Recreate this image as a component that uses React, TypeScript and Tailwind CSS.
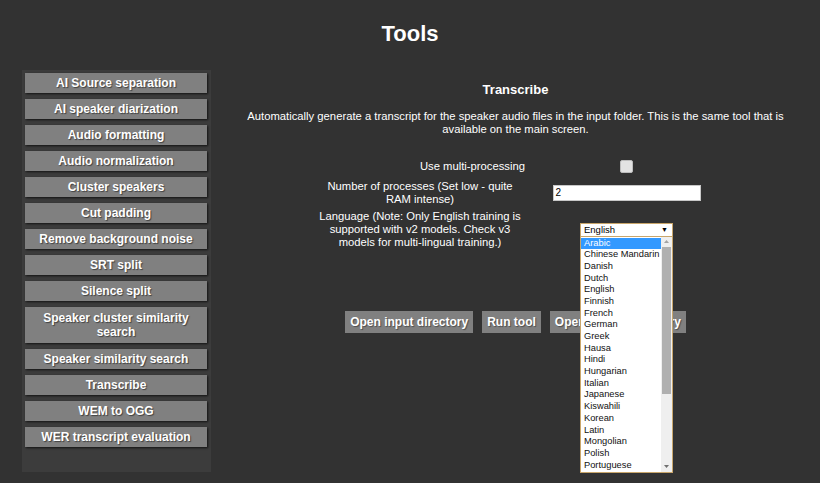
import React from 'react';

const TOOLS = [
  'AI Source separation',
  'AI speaker diarization',
  'Audio formatting',
  'Audio normalization',
  'Cluster speakers',
  'Cut padding',
  'Remove background noise',
  'SRT split',
  'Silence split',
  'Speaker cluster similarity search',
  'Speaker similarity search',
  'Transcribe',
  'WEM to OGG',
  'WER transcript evaluation',
];

const LANGUAGES = [
  'Arabic', 'Chinese Mandarin', 'Danish', 'Dutch', 'English', 'Finnish', 'French',
  'German', 'Greek', 'Hausa', 'Hindi', 'Hungarian', 'Italian', 'Japanese',
  'Kiswahili', 'Korean', 'Latin', 'Mongolian', 'Polish', 'Portuguese',
];

function ToolButton({ label }: { label: string }) {
  // the one long label wraps onto two lines and gets a little more room
  const tall = label.length > 26;
  return (
    <button
      className={`w-[182px] bg-[#808080] px-[4px] text-[12px] font-bold leading-[14px] text-white shadow-[1px_1px_2px_rgba(0,0,0,0.7)] [text-shadow:1px_1px_1px_rgba(0,0,0,0.5)] ${tall ? 'py-[4px]' : 'py-[3px]'}`}
    >
      {label}
    </button>
  );
}

function ActionButton({ label }: { label: string }) {
  return (
    <button className="h-[22px] bg-[#808080] px-[5px] text-[12px] font-bold leading-[22px] text-white [text-shadow:1px_1px_1px_rgba(0,0,0,0.4)]">
      {label}
    </button>
  );
}

function LanguageSelect() {
  return (
    <div className="relative w-[93px]">
      <div className="flex h-[14px] items-center justify-between border border-[#c9a66b] bg-white pl-[3px] pr-[4px] text-[9.5px] leading-[12px] text-black">
        <span>English</span>
        <span className="text-[7px]">▼</span>
      </div>
      {/* open option list */}
      <div className="absolute left-0 top-[13px] z-10 flex h-[237px] w-[93px] border border-[#c9a66b] bg-white">
        <ul className="min-w-0 flex-1 overflow-hidden pt-[1px] text-[9.3px] text-[#111]">
          {LANGUAGES.map((lang, i) => (
            <li
              key={lang}
              className={`h-[11.7px] whitespace-nowrap pl-[3px] leading-[11.7px] ${i === 0 ? 'bg-[#3399ff] text-white' : ''}`}
            >
              {lang}
            </li>
          ))}
        </ul>
        <div className="flex w-[11px] shrink-0 flex-col bg-[#efefef]">
          <div className="flex h-[10px] items-center justify-center">
            <svg width="5" height="3" viewBox="0 0 5 3"><path d="M0 3 L2.5 0 L5 3 Z" fill="#a3a3a3" /></svg>
          </div>
          <div className="mx-[1px] h-[147px] bg-[#b0b0b0]" />
          <div className="flex-1" />
          <div className="flex h-[10px] items-center justify-center">
            <svg width="5" height="3" viewBox="0 0 5 3"><path d="M0 0 L2.5 3 L5 0 Z" fill="#707070" /></svg>
          </div>
        </div>
      </div>
    </div>
  );
}

export default function App() {
  return (
    <div className="h-[483px] w-full overflow-hidden bg-[#323232] font-['Liberation_Sans',Arial,sans-serif] text-white">
      <h1 className="pt-[21px] text-center text-[22px] font-bold leading-[26px]">Tools</h1>

      <div className="mt-[23px] flex">
        <aside className="ml-[22px] flex h-[402px] w-[189px] shrink-0 flex-col gap-[6px] bg-[#3c3c3c] pl-[3px] pr-[4px] pt-[3px]">
          {TOOLS.map((t) => (
            <ToolButton key={t} label={t} />
          ))}
        </aside>

        <main className="flex-1">
          <h2 className="pt-[12px] text-center text-[13px] font-bold leading-[16px]">Transcribe</h2>
          <p className="mt-[12px] px-[18px] text-center text-[11.25px] leading-[13px]">
            Automatically generate a transcript for the speaker audio files in the input folder. This is the same tool that is available on the main screen.
          </p>

          <div className="mt-[24px] flex items-center text-[11.25px] leading-[13px]">
            <div className="flex w-[314px] justify-end">
              <div className="max-w-[210px] text-center">Use multi-processing</div>
            </div>
            <div className="flex w-[203px] justify-center">
              <div className="h-[13px] w-[13px] rounded-[2px] border border-[#bdbdbd] bg-[#e3e3e3]" />
            </div>
          </div>

          <div className="mt-[7px] flex items-center text-[11.25px] leading-[13px]">
            <div className="flex w-[314px] justify-end">
              <div className="max-w-[210px] text-center">Number of processes (Set low - quite RAM intense)</div>
            </div>
            <div className="flex w-[203px] justify-center">
              <div className="h-[16px] w-[148px] border border-[#c8c8c8] bg-white pl-[2px] text-[10px] leading-[14px] text-black">
                2
              </div>
            </div>
          </div>

          <div className="mt-[4px] flex items-center text-[11.25px] leading-[13px]">
            <div className="flex w-[314px] justify-end">
              <div className="max-w-[210px] text-center">
                Language (Note: Only English training is supported with v2 models. Check v3 models for multi-lingual training.)
              </div>
            </div>
            <div className="flex w-[203px] justify-center">
              <LanguageSelect />
            </div>
          </div>

          <div className="mt-[62px] flex justify-center gap-[9px]">
            <ActionButton label="Open input directory" />
            <ActionButton label="Run tool" />
            <ActionButton label="Open output directory" />
          </div>
        </main>
      </div>
    </div>
  );
}
